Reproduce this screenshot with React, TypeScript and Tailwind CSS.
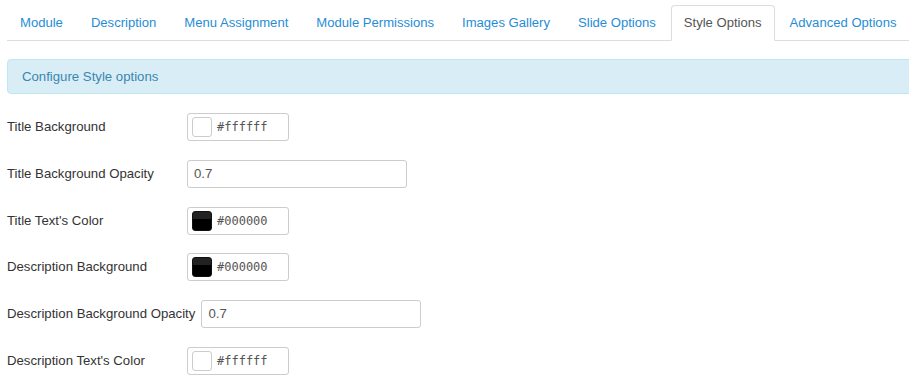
import React from "react";

const tabs = [
  "Module",
  "Description",
  "Menu Assignment",
  "Module Permissions",
  "Images Gallery",
  "Slide Options",
  "Style Options",
  "Advanced Options",
];

type Row =
  | { label: string; kind: "color"; value: string; dark: boolean }
  | { label: string; kind: "text"; value: string };

const rows: Row[] = [
  { label: "Title Background", kind: "color", value: "#ffffff", dark: false },
  { label: "Title Background Opacity", kind: "text", value: "0.7" },
  { label: "Title Text's Color", kind: "color", value: "#000000", dark: true },
  { label: "Description Background", kind: "color", value: "#000000", dark: true },
  { label: "Description Background Opacity", kind: "text", value: "0.7" },
  { label: "Description Text's Color", kind: "color", value: "#ffffff", dark: false },
];

export default function App() {
  return (
    <div className="w-[909px] h-[379px] overflow-hidden bg-white font-['Liberation_Sans',Arial,sans-serif] text-[13.2px] text-[#333]">
      <div className="w-[960px] pl-[7px]">
        {/* Tabs */}
        <ul className="flex mt-[5px] border-b border-[#ddd] text-[13.08px]">
          {tabs.map((t) => {
            const active = t === "Style Options";
            return (
              <li key={t} className="-mb-px mr-[2px]">
                <span
                  className={
                    "block px-[12px] pt-[8px] pb-[8px] leading-[18px] border rounded-t-[4px] " +
                    (active
                      ? "border-[#ddd] border-b-transparent bg-white text-[#555]"
                      : "border-transparent text-[#1f8dd6]")
                  }
                >
                  {t}
                </span>
              </li>
            );
          })}
        </ul>

        {/* Alert */}
        <div className="mt-[18px] border border-[#bce8f1] bg-[#d9edf7] rounded-[4px] pl-[14px] py-[8px] leading-[17px] text-[#3a87ad]">
          Configure Style options
        </div>

        {/* Form */}
        <div className="mt-[19px] flex flex-col gap-[18.8px]">
          {rows.map((r) => (
            <div key={r.label} className="flex items-center h-[28px]">
              <label className="min-w-[180px] pr-[6px] shrink-0 whitespace-nowrap">
                {r.label}
              </label>
              {r.kind === "color" ? (
                <div className="flex items-center w-[102px] h-[28px] border border-[#ccc] rounded-[3px] bg-white pl-[4px]">
                  <span
                    className={
                      "block w-[20px] h-[20px] rounded-[3px] border " +
                      (r.dark
                        ? "border-[#111] bg-[linear-gradient(#222_40%,#000_40%)]"
                        : "border-[#ccc] bg-white")
                    }
                  />
                  <span className="ml-[5px] font-['DejaVu_Sans_Mono',monospace] text-[12px] text-[#555]">
                    {r.value}
                  </span>
                </div>
              ) : (
                <div className="flex items-center w-[220px] h-[28px] border border-[#ccc] rounded-[3px] bg-white pl-[6px] text-[#555]">
                  {r.value}
                </div>
              )}
            </div>
          ))}
        </div>
      </div>
    </div>
  );
}
